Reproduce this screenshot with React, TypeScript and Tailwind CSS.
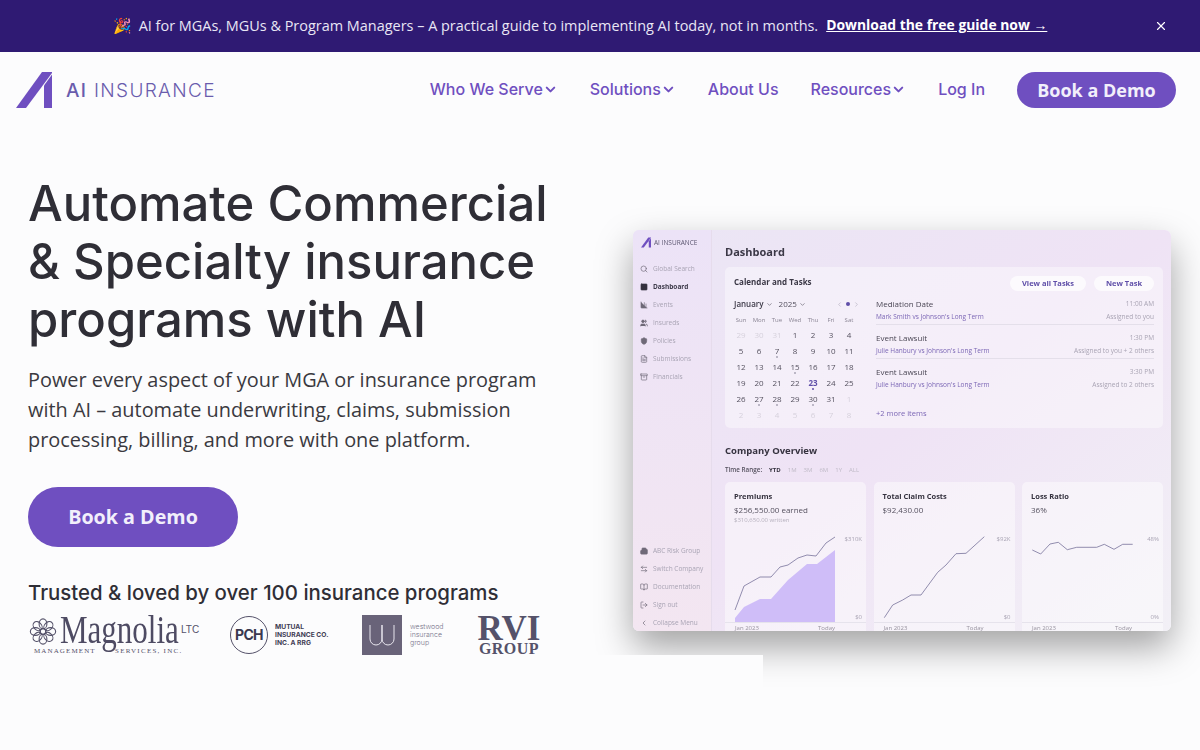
import React from "react";
import { ChevronDown, ChevronLeft, ChevronRight, X, Search, ChartColumn, Users, ShieldCheck, FileText, Archive, Building2, ArrowLeftRight, BookOpen, LogOut, SquareChartGantt } from "lucide-react";

const geo = "font-['Inter',sans-serif]";

function NavItem({ label, chevron }: { label: string; chevron?: boolean }) {
  return (
    <a className={`flex items-center pb-[3px] text-[16px] font-medium text-[#6f4fc0] ${geo}`}>
      {label}
      {chevron && <ChevronDown size={15} strokeWidth={3.2} className="mt-[1px]" />}
    </a>
  );
}

function SideItem({ icon: Icon, label, active, solid }: { icon: any; label: string; active?: boolean; solid?: boolean }) {
  return (
    <div className={`flex h-[18px] items-center gap-[5px] pl-[7px] pt-[2px] text-[6.5px] ${active ? "font-bold text-[#3d3a4a]" : "text-[#a9a4b4]"}`}>
      <Icon size={8} className={active ? "text-[#35323f]" : "text-[#6f6a78]"} fill={active || solid ? "currentColor" : "none"} strokeWidth={2} />
      {label}
    </div>
  );
}

const days: [string, number, boolean?][] = [
  ["29", 0], ["30", 0], ["31", 0], ["1", 1], ["2", 1], ["3", 1], ["4", 1],
  ["5", 1], ["6", 1], ["7", 1, true], ["8", 1], ["9", 1], ["10", 1], ["11", 1],
  ["12", 1], ["13", 1], ["14", 1], ["15", 1, true], ["16", 1], ["17", 1], ["18", 1],
  ["19", 1], ["20", 1], ["21", 1], ["22", 1], ["23", 2, true], ["24", 1], ["25", 1],
  ["26", 1], ["27", 1, true], ["28", 1, true], ["29", 1], ["30", 1, true], ["31", 1], ["1", 0],
  ["2", 0], ["3", 0], ["4", 0], ["5", 0], ["6", 0], ["7", 0], ["8", 0],
];

function TaskRow({ title, sub, time, who, last }: { title: string; sub: string; time: string; who: string; last?: boolean }) {
  return (
    <div className={`relative h-[34px] pt-[8px] ${last ? "" : "border-b border-[#e4dfea]"}`}>
      <div className="flex h-[10px] items-center justify-between">
        <span className="text-[8px] text-[#4b4755]">{title}</span>
        <span className="text-[6.5px] text-[#a9a4b4]">{time}</span>
      </div>
      <div className="mt-[3px] flex h-[10px] items-center justify-between">
        <span className="text-[6.5px] text-[#7b66b5]">{sub}</span>
        <span className="text-[6.5px] text-[#a9a4b4]">{who}</span>
      </div>
    </div>
  );
}

function ChartCard({ title, value, sub, top, children }: { title: string; value: string; sub?: string; top: string; children: React.ReactNode }) {
  return (
    <div className="h-[160px] rounded-t-[5px] bg-white/45 pt-[9px]">
      <div className="flex h-[12px] items-center pl-[9px] text-[7.5px] font-bold text-[#35323f]">{title}</div>
      <div className="mt-[2px] flex h-[10px] items-center pl-[9px] text-[8px] text-[#55515f]">{value}</div>
      <div className="flex h-[10px] items-center pl-[9px] text-[6px] text-[#b5b0bd]">{sub}</div>
      <div className="mt-[10px] flex h-[87px] justify-between pl-[9px] pr-[4px]">
        <svg width="102" height="87" viewBox="0 0 102 87" className="overflow-visible">{children}</svg>
        <div className="flex flex-col items-end justify-between text-[6px] text-[#a9a4b4]">
          <span>{top}</span>
          <span>{top.startsWith("$") ? "$0" : "0%"}</span>
        </div>
      </div>
      <div className="flex h-[12px] items-center justify-between border-t border-[#e6e3ec] pl-[10px] pr-[31px] text-[6px] text-[#98939f]">
        <span>Jan 2023</span>
        <span>Today</span>
      </div>
    </div>
  );
}

function LogoMark({ w, h }: { w: number; h: number }) {
  return (
    <svg width={w} height={h} viewBox="0 0 36 36" className="shrink-0">
      <path d="M0 36 L26 0 H36 V1 L10 36 Z" fill="#6f4fc0" />
      <path d="M28 13.5 L36 2.5 V36 H28 Z" fill="#6f4fc0" />
    </svg>
  );
}

function Mock() {
  return (
    <div className="flex h-[401px] w-[538px] overflow-hidden rounded-[6px] bg-gradient-to-br from-[#ebe6f5] via-[#efe3f5] to-[#f2f0f6] shadow-[0_16px_36px_rgba(0,0,0,0.36)] blur-[0.45px]">
      <aside className="flex w-[79px] shrink-0 flex-col justify-between border-r border-[#e6dcec] bg-gradient-to-b from-[#ece3f7] to-[#f3e6f1]">
        <div>
          <div className="mb-[4px] flex h-[25px] items-center gap-[3px] pl-[8px] text-[6.5px] font-medium text-[#5c5670]">
            <LogoMark w={10} h={11} />
            AI INSURANCE
          </div>
          <SideItem icon={Search} label="Global Search" />
          <SideItem icon={SquareChartGantt} label="Dashboard" active />
          <SideItem icon={ChartColumn} label="Events" solid />
          <SideItem icon={Users} label="Insureds" solid />
          <SideItem icon={ShieldCheck} label="Policies" solid />
          <SideItem icon={FileText} label="Submissions" />
          <SideItem icon={Archive} label="Financials" />
        </div>
        <div>
          <SideItem icon={Building2} label="ABC Risk Group" solid />
          <SideItem icon={ArrowLeftRight} label="Switch Company" />
          <SideItem icon={BookOpen} label="Documentation" />
          <SideItem icon={LogOut} label="Sign out" />
          <SideItem icon={ChevronLeft} label="Collapse Menu" />
        </div>
      </aside>
      <main className="min-w-0 flex-1 pl-[13px] pr-[8px] pt-[14px]">
        <div className="flex h-[16px] items-center text-[11px] font-bold text-[#3b3846]">Dashboard</div>
        <section className="mt-[7px] h-[161px] rounded-[5px] bg-white/40 px-[9px] pt-[9px]">
          <div className="flex h-[15px] items-center justify-between">
            <span className="-mt-[4px] text-[8px] font-bold text-[#3b3846]">Calendar and Tasks</span>
            <div className="flex gap-[8px] text-[7.5px] font-bold text-[#5f4ea8]">
              <span className="flex h-[15px] w-[76px] items-center justify-center rounded-full bg-white/70">View all Tasks</span>
              <span className="flex h-[15px] w-[60px] items-center justify-center rounded-full bg-white/70">New Task</span>
            </div>
          </div>
          <div className="flex">
            <div className="w-[142px] shrink-0 pt-[6px]">
              <div className="flex h-[14px] w-[126px] items-center text-[#55515f]">
                <span className="text-[8px] font-semibold text-[#3b3846]">January</span>
                <ChevronDown size={7} className="ml-[2px]" />
                <span className="ml-[6px] text-[8px]">2025</span>
                <ChevronDown size={7} className="ml-[2px]" />
                <span className="ml-auto flex items-center gap-[3px] text-[#b0aaba]">
                  <ChevronLeft size={7} />
                  <span className="size-[4px] rounded-full bg-[#5f4ea8]" />
                  <ChevronRight size={7} />
                </span>
              </div>
              <div className="-ml-[2px] mt-[4px] grid h-[10px] w-[126px] grid-cols-7 items-center text-center text-[6px] text-[#8b8695]">
                {["Sun", "Mon", "Tue", "Wed", "Thu", "Fri", "Sat"].map((d) => <span key={d}>{d}</span>)}
              </div>
              <div className="-ml-[2px] mt-[2px] grid w-[126px] grid-cols-7 text-center text-[8px]">
                {days.map(([d, k, dot], i) => (
                  <span key={i} className={`relative flex h-[16px] items-center justify-center ${k === 0 ? "text-[#d6d1dc]" : k === 2 ? "font-bold text-[#5f4ea8]" : "text-[#55515f]"}`}>
                    {d}
                    {dot && <span className={`absolute bottom-[1px] left-1/2 size-[2px] -translate-x-1/2 rounded-full ${k === 2 ? "bg-[#5f4ea8]" : "bg-[#a9a4b4]"}`} />}
                  </span>
                ))}
              </div>
            </div>
            <div className="min-w-0 flex-1">
              <TaskRow title="Mediation Date" sub="Mark Smith vs Johnson's Long Term" time="11:00 AM" who="Assigned to you" />
              <TaskRow title="Event Lawsuit" sub="Julie Hanbury vs Johnson's Long Term" time="1:30 PM" who="Assigned to you + 2 others" />
              <TaskRow title="Event Lawsuit" sub="Julie Hanbury vs Johnson's Long Term" time="3:30 PM" who="Assigned to 2 others" last />
              <div className="mt-[15px] flex h-[12px] items-center text-[7.5px] text-[#7b66b5]">+2 more items</div>
            </div>
          </div>
        </section>
        <div className="mt-[15px] flex h-[16px] items-center text-[9.5px] font-bold text-[#35323f]">Company Overview</div>
        <div className="mt-[6px] flex h-[10px] items-center gap-[7px] text-[6px] text-[#c0bbc8]">
          <span className="text-[6.3px] font-semibold text-[#55515f]">Time Range:</span>
          <span className="font-bold text-[#35323f]">YTD</span>
          <span>1M</span><span>3M</span><span>6M</span><span>1Y</span><span>ALL</span>
        </div>
        <div className="mt-[7px] grid grid-cols-3 gap-[7.5px]">
          <ChartCard title="Premiums" value="$256,550.00 earned" sub="$310,650.00 written" top="$310K">
            <polygon fill="#cfbdf8" points="1,83 10,72 26,64 37,64 54,45 73,29 83,29 101,15 101,87 1,87" />
            <polyline fill="none" stroke="#77729a" strokeWidth="0.8" points="1,75 10,51 26,42 37,42 46,32 54,30 64,23 73,20 82,21 92,8 101,2" />
          </ChartCard>
          <ChartCard title="Total Claim Costs" value="$92,430.00" top="$92K">
            <polyline fill="none" stroke="#77729a" strokeWidth="0.8" points="1.3,82.7 9.7,70 19.7,65 28,60 38,60 54.7,37.3 63,30 73,18.7 83,18.3 101.3,1.7" />
          </ChartCard>
          <ChartCard title="Loss Ratio" value="36%" top="48%">
            <polyline fill="none" stroke="#77729a" strokeWidth="0.8" points="1.3,15 9.7,19 19,9 27.3,7.3 36.3,14.7 45.7,12.3 65.7,12.3 73.3,9.3 83,14.3 91.7,9.3 101.7,9.3" />
          </ChartCard>
        </div>
      </main>
    </div>
  );
}

function Flower() {
  const petals = [0, 45, 90, 135, 180, 225, 270, 315];
  return (
    <svg width="30" height="27" viewBox="0 0 32 32" fill="none" stroke="#55526a" strokeWidth="1.3" className="absolute left-0 top-[3px]">
      {petals.map((a) => (
        <ellipse key={a} cx="16" cy="7" rx="4.6" ry="6" transform={`rotate(${a} 16 16)`} />
      ))}
      <circle cx="16" cy="16" r="3.5" />
    </svg>
  );
}

function Logos() {
  return (
    <div className="mt-[10px] flex h-[40px] items-center text-[#55526a]">
      <div className="relative h-[40px] w-[170px] shrink-0 font-['Liberation_Serif',serif]">
        <Flower />
        <span className="absolute left-[32px] top-[-2px] origin-left scale-x-[0.775] whitespace-nowrap text-[40px] leading-[34px] text-[#4e4b63]">Magnolia</span>
        <span className="absolute left-[153px] top-[9px] font-['Liberation_Sans',sans-serif] text-[10px] leading-[12px]">LTC</span>
        <span className="absolute left-[6px] top-[32px] whitespace-nowrap text-[7px] leading-[8px] tracking-[0.16em]">MANAGEMENT</span>
        <span className="absolute left-[87px] top-[32px] whitespace-nowrap text-[7px] leading-[8px] tracking-[0.18em]">SERVICES, INC.</span>
      </div>
      <div className="ml-[32px] flex h-[40px] w-[102px] items-center font-['Inter',sans-serif]">
        <div className="relative flex size-[38px] shrink-0 items-center justify-center rounded-full border-[1.5px] border-[#55526a]">
          <span className="text-[14px] font-bold leading-none tracking-tighter text-[#3a3850]">PCH</span>
        </div>
        <div className="ml-[7px] text-[6.7px] font-bold leading-[8px] text-[#3f3d54]">MUTUAL<br />INSURANCE CO.<br />INC. A RRG</div>
      </div>
      <div className="ml-[30px] flex h-[40px] w-[100px] items-center">
        <div className="flex size-[40px] shrink-0 items-center justify-center bg-[#696379]">
          <svg width="26" height="23" viewBox="0 0 26 23" fill="none" stroke="#e8e6ee" strokeWidth="1">
            <path d="M1 1 V15 a6 6 0 0 0 12 0 V1 V15 a6 6 0 0 0 12 0 V1" />
          </svg>
        </div>
        <div className="ml-[8px] font-['Inter',sans-serif] text-[7px] font-light leading-[8px] text-[#77748a]">westwood<br />insurance<br />group</div>
      </div>
      <div className="ml-[16px] flex w-[62px] flex-col items-center font-['Liberation_Serif',serif] font-bold text-[#55526a]">
        <span className="text-[35px] leading-[27px]">RVI</span>
        <span className="text-[16px] leading-[13px] tracking-[0.03em]">GROUP</span>
      </div>
    </div>
  );
}

export default function App() {
  return (
    <div className="relative h-[750px] w-[1200px] overflow-hidden bg-[#fcfcfd] font-['Open_Sans',sans-serif]">
      <div className="relative flex h-[52px] items-center justify-center bg-[#2f1a73] pb-[1px] pr-[40px] text-[14.45px] text-[#e9e6f5]">
        <span className="mr-[7px] text-[15px]">🎉</span>
        <span>AI for MGAs, MGUs &amp; Program Managers – A practical guide to implementing AI today, not in months.</span>
        <a className="ml-[8px] text-[13.9px] font-bold text-white underline">Download the free guide now →</a>
        <X size={14} strokeWidth={2} className="absolute right-[32px] top-[19px] text-white" />
      </div>
      <header className="flex h-[76px] items-start justify-between pl-[16px] pr-[24px] pt-[20px]">
        <div className="flex items-center">
          <LogoMark w={36} h={36} />
          <span className={`ml-[14px] text-[19px] leading-none tracking-[0.07em] text-[#6a5cad] ${geo}`}>
            <span className="font-medium">AI</span> <span className="font-light">INSURANCE</span>
          </span>
        </div>
        <nav className="flex items-center gap-[32px]">
          <NavItem label="Who We Serve" chevron />
          <NavItem label="Solutions" chevron />
          <NavItem label="About Us" />
          <NavItem label="Resources" chevron />
          <NavItem label="Log In" />
          <a className="flex h-[36px] w-[159px] items-center justify-center rounded-full bg-[#6f4fc0] text-[18px] font-bold text-[#f2effb]">Book a Demo</a>
        </nav>
      </header>
      <div className="flex justify-between pl-[28px] pr-[29px]">
        <div className="w-[560px] pt-[47px]">
          <h1 className={`text-[49px] font-medium leading-[58px] text-[#2f2e36] ${geo}`}>
            Automate Commercial<br />&amp; Specialty insurance<br />programs with AI
          </h1>
          <p className="mt-[16px] text-[19.9px] leading-[30px] text-[#3a3940]">
            Power every aspect of your MGA or insurance program<br />with AI – automate underwriting, claims, submission<br />processing, billing, and more with one platform.
          </p>
          <a className="mt-[32px] flex h-[60px] w-[210px] items-center justify-center rounded-full bg-[#6f4fc0] text-[19.7px] font-bold text-[#f2effb]">Book a Demo</a>
          <div className={`mt-[34px] h-[24px] text-[20.4px] font-medium leading-[24px] text-[#2f2e36] ${geo}`}>Trusted &amp; loved by over 100 insurance programs</div>
          <Logos />
        </div>
        <div className="pt-[102px]">
          <Mock />
        </div>
      </div>
      <div className="absolute left-0 top-[655px] h-[60px] w-[763px] bg-[#fcfcfd]" />
    </div>
  );
}
